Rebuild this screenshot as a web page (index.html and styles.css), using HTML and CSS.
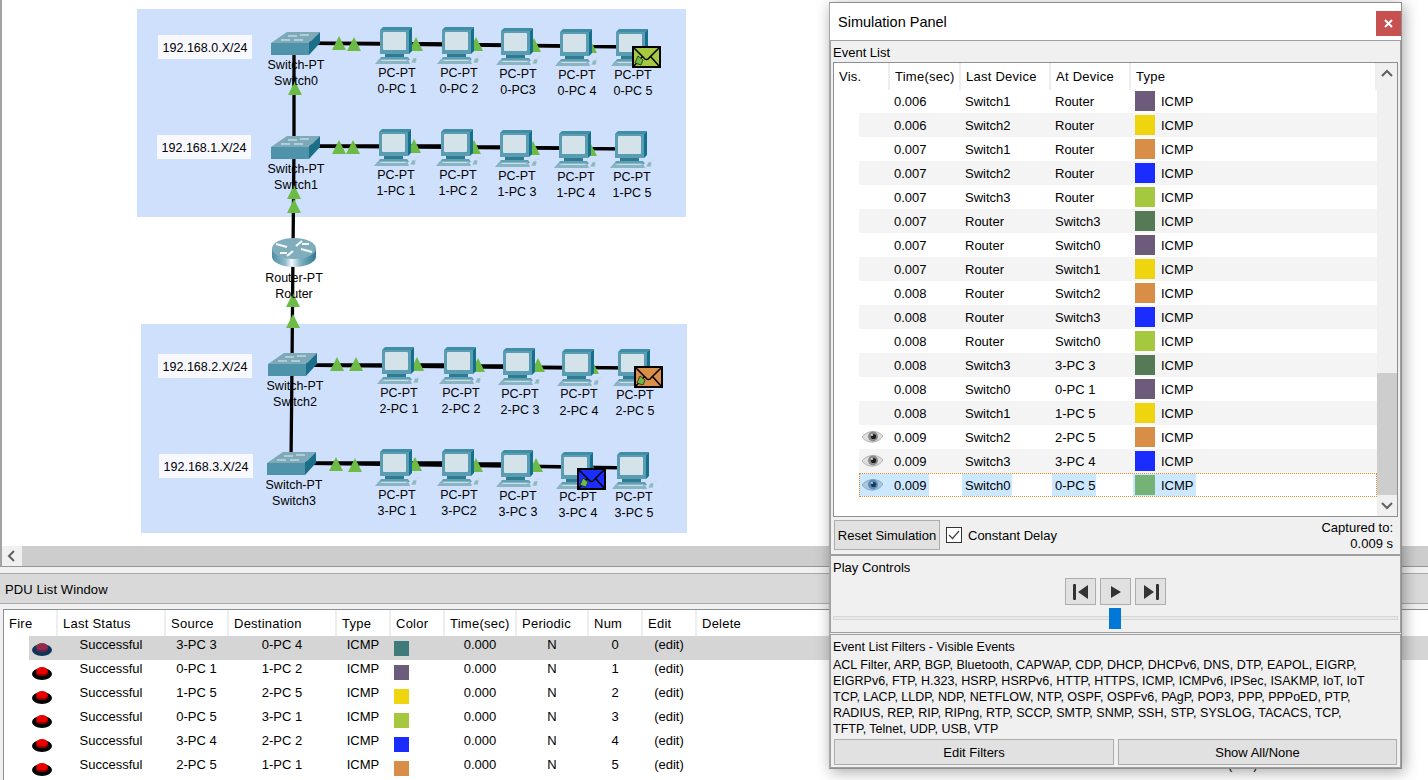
FILE: index.html
```html
<!DOCTYPE html>
<html lang="en">
<head>
<meta charset="utf-8">
<title>Simulation Panel</title>
<link rel="stylesheet" href="styles.css">
</head>
<body>
<svg class="defs" width="0" height="0" aria-hidden="true">
  <defs>
    <linearGradient id="routerSide" x1="0" x2="1" y1="0" y2="0">
      <stop offset="0" stop-color="#4e8ea3"/><stop offset=".3" stop-color="#8fbac8"/><stop offset=".45" stop-color="#f4f9fb"/><stop offset=".65" stop-color="#7fb0c0"/><stop offset="1" stop-color="#2f7a92"/>
    </linearGradient>
    <symbol id="tri" width="14" height="14" viewBox="0 0 14 14"><polygon points="7,0 14,14 0,14" fill="#6cbb45"/></symbol>
    <symbol id="pc" width="47" height="38" viewBox="0 0 47 38">
      <path d="M40 31c1-2 3-2 5-2" fill="none" stroke="#c4dbe4"/>
      <polygon points="36,36 38,31 42,31 41,36" fill="#8fb8c6" stroke="#d7e6ec" stroke-width=".6"/>
      <polygon points="5,3 8,0 37,0 34,3" fill="#3f8ea6"/>
      <polygon points="34,3 37,0 37,24 34,27" fill="#14708c"/>
      <rect x="5" y="3" width="29" height="24" fill="#5a9db3"/>
      <rect x="8" y="5" width="23" height="18" rx="1" fill="#d4e3ea"/>
      <rect x="10" y="27" width="19" height="3" fill="#2f7b92"/>
      <polygon points="6,30 33,30 35,33 4,33" fill="#5f9fb3"/>
      <polygon points="4,32 33,32 35,37 0,37" fill="#89b4c3"/>
      <polygon points="7,33 31,33 32,34 6,34" fill="#c9dde5"/>
    </symbol>
    <symbol id="switch" width="50" height="24" viewBox="0 0 50 24">
      <polygon points="0,11 16,0 49,0 38,11" fill="#7da9b8"/>
      <rect x="0" y="11" width="38" height="12" fill="#4f93aa"/>
      <polygon points="38,11 49,0 49,11 38,23" fill="#1c6f89"/>
      <path d="M17 4h9M29 3h9M10 8h9M23 8h9" stroke="#e6f0f3" stroke-width="1" fill="none"/>
    </symbol>
    <symbol id="router" width="44" height="30" viewBox="0 0 44 30">
      <path d="M0 11v8c0 5 10 10 22 10s22-5 22-10v-8z" fill="url(#routerSide)"/>
      <ellipse cx="22" cy="10.500" rx="22" ry="10.500" fill="#7fadbc"/>
      <path d="M4 6l11 3M40 14l-11-3M15 18l6-5M30 3l-6 5M8 15h7M37 6h-7" stroke="#f4f8fa" stroke-width="2.200" fill="none"/>
    </symbol>
    <symbol id="env" width="29" height="22" viewBox="0 0 29 22">
      <rect x="1" y="1" width="27" height="20" stroke="#000" stroke-width="2"/>
      <path d="M2 2l10 10c1 2 4 2 5 0L27 2M2 20l8-9M27 20l-8-9" fill="none" stroke="#000" stroke-width="1.500"/>
      <polygon points="6,10 11,14 9,19 3,17" fill="#6cbb45" stroke="#222" stroke-width=".8"/>
    </symbol>
    <symbol id="eye" width="21" height="14" viewBox="0 0 21 14">
      <path d="M0 7C4 1 15-1 21 6c-4 7-15 9-21 1z" fill="#dedede" stroke="#a4a4a4" stroke-width=".8"/>
      <circle cx="11" cy="6.500" r="5" fill="#8a8a8a"/>
      <circle cx="11.500" cy="6.500" r="2.600" fill="#1d1d1d"/>
      <circle cx="10" cy="5" r=".9" fill="#fff"/>
    </symbol>
    <symbol id="eyeblue" width="21" height="14" viewBox="0 0 21 14">
      <path d="M0 7C4 1 15-1 21 6c-4 7-15 9-21 1z" fill="#a9c6df" stroke="#7c9fbd" stroke-width=".8"/>
      <circle cx="11" cy="6.500" r="5" fill="#5d8cb2"/>
      <circle cx="11.500" cy="6.500" r="2.600" fill="#173a5a"/>
      <circle cx="10" cy="5" r=".9" fill="#dbeafa"/>
    </symbol>
    <symbol id="fire" width="20" height="14" viewBox="0 0 20 14">
      <ellipse cx="10" cy="8" rx="10" ry="6" fill="#000"/>
      <ellipse cx="10" cy="5.500" rx="6" ry="4.500" fill="#e60000"/>
      <path d="M4 6c1 3 11 3 12 0v2c-2 3-10 3-12 0z" fill="#8e0000"/>
    </symbol>
    <symbol id="fireon" width="20" height="14" viewBox="0 0 20 14">
      <ellipse cx="10" cy="8" rx="10" ry="6" fill="#0e3358"/>
      <ellipse cx="10" cy="5.500" rx="6" ry="4.500" fill="#8f2c4c"/>
      <path d="M4 6c1 3 11 3 12 0v2c-2 3-10 3-12 0z" fill="#5f2447"/>
    </symbol>
  </defs>
</svg>

<div class="app">
  <section class="workspace">
    <div class="canvas">
      <svg class="topology" width="1426" height="546" viewBox="2 0 1426 546">
        <rect class="zone" x="137" y="9" width="549" height="208"/>
        <rect class="zone" x="141" y="324" width="546" height="209"/>

        <rect class="netbox" x="158" y="35" width="94" height="24"/>
        <rect class="netbox" x="157" y="135" width="94" height="24"/>
        <rect class="netbox" x="158" y="354" width="94" height="24"/>
        <rect class="netbox" x="159" y="454" width="94" height="24"/>
        <text class="lbl" x="205" y="52">192.168.0.X/24</text>
        <text class="lbl" x="204" y="152">192.168.1.X/24</text>
        <text class="lbl" x="205" y="371">192.168.2.X/24</text>
        <text class="lbl" x="206" y="471">192.168.3.X/24</text>

        <g class="links">
          <polyline points="294,43 294,147 293,252 292,365 291,463"/>
          <path d="M294 43L397 44M294 43L459 44M294 43L518 45M294 43L577 46M294 43L633 47"/>
          <path d="M294 146L396 146M294 146L458 146M294 146L517 147M294 146L576 148M294 146L632 149"/>
          <path d="M292 365L399 365M292 365L461 365M292 365L520 366M292 365L579 368M292 365L635 368"/>
          <path d="M291 463L397 463M291 463L459 463M291 463L518 464M291 463L578 467M291 463L634 468"/>
        </g>

        <use href="#tri" x="332" y="36"/><use href="#tri" x="347" y="37"/><use href="#tri" x="409" y="37"/><use href="#tri" x="469" y="37"/><use href="#tri" x="527" y="38"/><use href="#tri" x="583" y="39"/>
        <use href="#tri" x="332" y="140"/><use href="#tri" x="346" y="140"/><use href="#tri" x="407" y="139"/><use href="#tri" x="467" y="140"/><use href="#tri" x="526" y="141"/><use href="#tri" x="583" y="142"/>
        <use href="#tri" x="330" y="357"/><use href="#tri" x="349" y="357"/><use href="#tri" x="410" y="357"/><use href="#tri" x="471" y="358"/><use href="#tri" x="531" y="358"/><use href="#tri" x="585" y="360"/>
        <use href="#tri" x="329" y="457"/><use href="#tri" x="348" y="458"/><use href="#tri" x="408" y="457"/><use href="#tri" x="469" y="458"/><use href="#tri" x="529" y="458"/><use href="#tri" x="583" y="460"/>
        <use href="#tri" x="288" y="81"/><use href="#tri" x="287" y="185"/><use href="#tri" x="287" y="199"/><use href="#tri" x="286" y="293"/><use href="#tri" x="286" y="314"/>

        <use href="#switch" x="271" y="32"/>
        <use href="#switch" x="271" y="136"/>
        <use href="#router" x="272" y="238"/>
        <use href="#switch" x="268" y="353"/>
        <use href="#switch" x="267" y="452"/>

        <use href="#pc" x="375" y="27"/><use href="#pc" x="437" y="27"/><use href="#pc" x="496" y="28"/><use href="#pc" x="555" y="29"/><use href="#pc" x="611" y="29"/>
        <use href="#pc" x="374" y="129"/><use href="#pc" x="436" y="129"/><use href="#pc" x="495" y="130"/><use href="#pc" x="554" y="131"/><use href="#pc" x="610" y="131"/>
        <use href="#pc" x="377" y="347"/><use href="#pc" x="439" y="347"/><use href="#pc" x="498" y="348"/><use href="#pc" x="557" y="349"/><use href="#pc" x="613" y="349"/>
        <use href="#pc" x="375" y="449"/><use href="#pc" x="437" y="449"/><use href="#pc" x="496" y="450"/><use href="#pc" x="556" y="452"/><use href="#pc" x="612" y="452"/>

        <use class="env-lime" href="#env" x="632" y="46"/>
        <use class="env-orange" href="#env" x="634" y="366"/>
        <use class="env-blue" href="#env" x="577" y="468"/>

        <text class="lbl" x="296" y="69">Switch-PT</text><text class="lbl" x="296" y="85">Switch0</text>
        <text class="lbl" x="296" y="173">Switch-PT</text><text class="lbl" x="296" y="189">Switch1</text>
        <text class="lbl" x="294" y="282">Router-PT</text><text class="lbl" x="294" y="298">Router</text>
        <text class="lbl" x="295" y="390">Switch-PT</text><text class="lbl" x="295" y="406">Switch2</text>
        <text class="lbl" x="294" y="489">Switch-PT</text><text class="lbl" x="294" y="505">Switch3</text>

        <text class="lbl" x="397" y="77">PC-PT</text><text class="lbl" x="397" y="93">0-PC 1</text>
        <text class="lbl" x="459" y="77">PC-PT</text><text class="lbl" x="459" y="93">0-PC 2</text>
        <text class="lbl" x="518" y="78">PC-PT</text><text class="lbl" x="518" y="94">0-PC3</text>
        <text class="lbl" x="577" y="79">PC-PT</text><text class="lbl" x="577" y="95">0-PC 4</text>
        <text class="lbl" x="633" y="79">PC-PT</text><text class="lbl" x="633" y="95">0-PC 5</text>

        <text class="lbl" x="396" y="179">PC-PT</text><text class="lbl" x="396" y="195">1-PC 1</text>
        <text class="lbl" x="458" y="179">PC-PT</text><text class="lbl" x="458" y="195">1-PC 2</text>
        <text class="lbl" x="517" y="180">PC-PT</text><text class="lbl" x="517" y="196">1-PC 3</text>
        <text class="lbl" x="576" y="181">PC-PT</text><text class="lbl" x="576" y="197">1-PC 4</text>
        <text class="lbl" x="632" y="181">PC-PT</text><text class="lbl" x="632" y="197">1-PC 5</text>

        <text class="lbl" x="399" y="397">PC-PT</text><text class="lbl" x="399" y="413">2-PC 1</text>
        <text class="lbl" x="461" y="397">PC-PT</text><text class="lbl" x="461" y="413">2-PC 2</text>
        <text class="lbl" x="520" y="398">PC-PT</text><text class="lbl" x="520" y="414">2-PC 3</text>
        <text class="lbl" x="579" y="398">PC-PT</text><text class="lbl" x="579" y="415">2-PC 4</text>
        <text class="lbl" x="635" y="399">PC-PT</text><text class="lbl" x="635" y="415">2-PC 5</text>

        <text class="lbl" x="397" y="499">PC-PT</text><text class="lbl" x="397" y="515">3-PC 1</text>
        <text class="lbl" x="459" y="499">PC-PT</text><text class="lbl" x="459" y="515">3-PC2</text>
        <text class="lbl" x="518" y="500">PC-PT</text><text class="lbl" x="518" y="516">3-PC 3</text>
        <text class="lbl" x="578" y="501">PC-PT</text><text class="lbl" x="578" y="517">3-PC 4</text>
        <text class="lbl" x="634" y="501">PC-PT</text><text class="lbl" x="634" y="517">3-PC 5</text>
      </svg>
    </div>
    <div class="hscroll">
      <div class="hscroll-btn"><svg class="chev" width="10" height="12" viewBox="0 0 10 12"><polyline points="7,1 2,6 7,11"/></svg></div>
    </div>
  </section>

  <div class="pdu-title">PDU List Window</div>

  <div class="pdu-wrap">
    <table class="pdu">
      <colgroup>
        <col class="c-fire"><col class="c-status"><col class="c-src"><col class="c-dst"><col class="c-type"><col class="c-color"><col class="c-time"><col class="c-per"><col class="c-num"><col class="c-edit"><col class="c-del"><col>
      </colgroup>
      <thead>
        <tr><th>Fire</th><th>Last Status</th><th>Source</th><th>Destination</th><th>Type</th><th>Color</th><th>Time(sec)</th><th>Periodic</th><th>Num</th><th>Edit</th><th>Delete</th><th></th></tr>
      </thead>
      <tbody>
        <tr class="active"><td class="firecell"><svg class="fire"><use href="#fireon"/></svg></td><td>Successful</td><td>3-PC 3</td><td>0-PC 4</td><td>ICMP</td><td><span class="dot teal"></span></td><td>0.000</td><td>N</td><td>0</td><td>(edit)</td><td></td><td></td></tr>
        <tr><td class="firecell"><svg class="fire"><use href="#fire"/></svg></td><td>Successful</td><td>0-PC 1</td><td>1-PC 2</td><td>ICMP</td><td><span class="dot purple"></span></td><td>0.000</td><td>N</td><td>1</td><td>(edit)</td><td></td><td></td></tr>
        <tr><td class="firecell"><svg class="fire"><use href="#fire"/></svg></td><td>Successful</td><td>1-PC 5</td><td>2-PC 5</td><td>ICMP</td><td><span class="dot yellow"></span></td><td>0.000</td><td>N</td><td>2</td><td>(edit)</td><td></td><td></td></tr>
        <tr><td class="firecell"><svg class="fire"><use href="#fire"/></svg></td><td>Successful</td><td>0-PC 5</td><td>3-PC 1</td><td>ICMP</td><td><span class="dot lime"></span></td><td>0.000</td><td>N</td><td>3</td><td>(edit)</td><td></td><td></td></tr>
        <tr><td class="firecell"><svg class="fire"><use href="#fire"/></svg></td><td>Successful</td><td>3-PC 4</td><td>2-PC 2</td><td>ICMP</td><td><span class="dot blue"></span></td><td>0.000</td><td>N</td><td>4</td><td>(edit)</td><td></td><td></td></tr>
        <tr><td class="firecell"><svg class="fire"><use href="#fire"/></svg></td><td>Successful</td><td>2-PC 5</td><td>1-PC 1</td><td>ICMP</td><td><span class="dot orange"></span></td><td>0.000</td><td>N</td><td>5</td><td>(edit)</td><td></td><td class="under-panel">(edit)</td></tr>
      </tbody>
    </table>
  </div>
</div>

<aside class="panel">
  <header class="panel-head">
    <span class="panel-title">Simulation Panel</span>
    <button class="close" type="button" aria-label="Close"><svg width="9" height="9" viewBox="0 0 9 9"><path d="M1 1l7 7M8 1L1 8"/></svg></button>
  </header>

  <section class="group g-events">
    <div class="group-label">Event List</div>
    <div class="listbox">
      <div class="list-main">
        <div class="ev-head"><span>Vis.</span><span>Time(sec)</span><span>Last Device</span><span>At Device</span><span>Type</span></div>
        <div class="ev-row"><span class="vis"></span><span class="tm"><b>0.006</b></span><span class="dev"><b>Switch1</b></span><span class="dev"><b>Router</b></span><span class="ty"><b><i class="sw purple"></i>ICMP</b></span></div>
        <div class="ev-row"><span class="vis"></span><span class="tm"><b>0.006</b></span><span class="dev"><b>Switch2</b></span><span class="dev"><b>Router</b></span><span class="ty"><b><i class="sw yellow"></i>ICMP</b></span></div>
        <div class="ev-row"><span class="vis"></span><span class="tm"><b>0.007</b></span><span class="dev"><b>Switch1</b></span><span class="dev"><b>Router</b></span><span class="ty"><b><i class="sw orange"></i>ICMP</b></span></div>
        <div class="ev-row"><span class="vis"></span><span class="tm"><b>0.007</b></span><span class="dev"><b>Switch2</b></span><span class="dev"><b>Router</b></span><span class="ty"><b><i class="sw blue"></i>ICMP</b></span></div>
        <div class="ev-row"><span class="vis"></span><span class="tm"><b>0.007</b></span><span class="dev"><b>Switch3</b></span><span class="dev"><b>Router</b></span><span class="ty"><b><i class="sw lime"></i>ICMP</b></span></div>
        <div class="ev-row"><span class="vis"></span><span class="tm"><b>0.007</b></span><span class="dev"><b>Router</b></span><span class="dev"><b>Switch3</b></span><span class="ty"><b><i class="sw moss"></i>ICMP</b></span></div>
        <div class="ev-row"><span class="vis"></span><span class="tm"><b>0.007</b></span><span class="dev"><b>Router</b></span><span class="dev"><b>Switch0</b></span><span class="ty"><b><i class="sw purple"></i>ICMP</b></span></div>
        <div class="ev-row"><span class="vis"></span><span class="tm"><b>0.007</b></span><span class="dev"><b>Router</b></span><span class="dev"><b>Switch1</b></span><span class="ty"><b><i class="sw yellow"></i>ICMP</b></span></div>
        <div class="ev-row"><span class="vis"></span><span class="tm"><b>0.008</b></span><span class="dev"><b>Router</b></span><span class="dev"><b>Switch2</b></span><span class="ty"><b><i class="sw orange"></i>ICMP</b></span></div>
        <div class="ev-row"><span class="vis"></span><span class="tm"><b>0.008</b></span><span class="dev"><b>Router</b></span><span class="dev"><b>Switch3</b></span><span class="ty"><b><i class="sw blue"></i>ICMP</b></span></div>
        <div class="ev-row"><span class="vis"></span><span class="tm"><b>0.008</b></span><span class="dev"><b>Router</b></span><span class="dev"><b>Switch0</b></span><span class="ty"><b><i class="sw lime"></i>ICMP</b></span></div>
        <div class="ev-row"><span class="vis"></span><span class="tm"><b>0.008</b></span><span class="dev"><b>Switch3</b></span><span class="dev"><b>3-PC 3</b></span><span class="ty"><b><i class="sw moss"></i>ICMP</b></span></div>
        <div class="ev-row"><span class="vis"></span><span class="tm"><b>0.008</b></span><span class="dev"><b>Switch0</b></span><span class="dev"><b>0-PC 1</b></span><span class="ty"><b><i class="sw purple"></i>ICMP</b></span></div>
        <div class="ev-row"><span class="vis"></span><span class="tm"><b>0.008</b></span><span class="dev"><b>Switch1</b></span><span class="dev"><b>1-PC 5</b></span><span class="ty"><b><i class="sw yellow"></i>ICMP</b></span></div>
        <div class="ev-row"><span class="vis"><svg class="eye"><use href="#eye"/></svg></span><span class="tm"><b>0.009</b></span><span class="dev"><b>Switch2</b></span><span class="dev"><b>2-PC 5</b></span><span class="ty"><b><i class="sw orange"></i>ICMP</b></span></div>
        <div class="ev-row"><span class="vis"><svg class="eye"><use href="#eye"/></svg></span><span class="tm"><b>0.009</b></span><span class="dev"><b>Switch3</b></span><span class="dev"><b>3-PC 4</b></span><span class="ty"><b><i class="sw blue"></i>ICMP</b></span></div>
        <div class="ev-row selected"><span class="vis"><svg class="eye"><use href="#eyeblue"/></svg></span><span class="tm"><b>0.009</b></span><span class="dev"><b>Switch0</b></span><span class="dev"><b>0-PC 5</b></span><span class="ty"><b><i class="sw green"></i>ICMP</b></span></div>
      </div>
      <div class="vscroll">
        <div class="vbtn"><svg class="chev" width="12" height="8" viewBox="0 0 12 8"><polyline points="1,7 6,2 11,7"/></svg></div>
        <div class="vtrack"><div class="vthumb"></div></div>
        <div class="vbtn vbtn-down"><svg class="chev" width="12" height="8" viewBox="0 0 12 8"><polyline points="1,1 6,6 11,1"/></svg></div>
      </div>
    </div>
    <div class="sim-row">
      <button class="btn reset" type="button">Reset Simulation</button>
      <span class="check"><svg width="12" height="10" viewBox="0 0 12 10"><polyline points="1,5 4.500,8.500 11,1"/></svg></span>
      <span class="check-label">Constant Delay</span>
      <div class="captured"><div>Captured to:</div><div>0.009 s</div></div>
    </div>
  </section>

  <section class="group g-play">
    <div class="group-label">Play Controls</div>
    <div class="play-row">
      <button class="pbtn" type="button" aria-label="Back"><svg width="16" height="16" viewBox="0 0 16 16"><rect x="0" y="0" width="3" height="16" rx="1"/><polygon points="15,1 15,15 5,8"/></svg></button>
      <button class="pbtn" type="button" aria-label="Play"><svg width="16" height="16" viewBox="0 0 16 16"><polygon points="3,2 3,14 13,8"/></svg></button>
      <button class="pbtn" type="button" aria-label="Forward"><svg width="16" height="16" viewBox="0 0 16 16"><polygon points="1,1 1,15 11,8"/><rect x="13" y="0" width="3" height="16" rx="1"/></svg></button>
    </div>
    <div class="slider"><div class="slider-track"></div><div class="slider-handle"></div></div>
  </section>

  <section class="group g-filters">
    <div class="group-label">Event List Filters - Visible Events</div>
    <p class="filters">ACL Filter, ARP, BGP, Bluetooth, CAPWAP, CDP, DHCP, DHCPv6, DNS, DTP, EAPOL, EIGRP,<br>EIGRPv6, FTP, H.323, HSRP, HSRPv6, HTTP, HTTPS, ICMP, ICMPv6, IPSec, ISAKMP, IoT, IoT<br>TCP, LACP, LLDP, NDP, NETFLOW, NTP, OSPF, OSPFv6, PAgP, POP3, PPP, PPPoED, PTP,<br>RADIUS, REP, RIP, RIPng, RTP, SCCP, SMTP, SNMP, SSH, STP, SYSLOG, TACACS, TCP,<br>TFTP, Telnet, UDP, USB, VTP</p>
    <div class="filter-btns">
      <button class="btn" type="button">Edit Filters</button>
      <button class="btn" type="button">Show All/None</button>
    </div>
  </section>
</aside>
</body>
</html>
```

FILE: styles.css
```css
* { box-sizing: border-box; }
html, body { margin: 0; padding: 0; }
body {
  position: relative;
  width: 1428px;
  height: 780px;
  overflow: hidden;
  background: #f0f0f0;
  color: #000;
  font: 13px/16px "Liberation Sans", Arial, sans-serif;
}
.defs { position: absolute; }

.app { display: flex; flex-direction: column; height: 780px; }

.workspace {
  height: 567px;
  display: flex;
  flex-direction: column;
  border-left: 2px solid #a3a3a3;
  border-bottom: 1px solid #8f979c;
  background: #fff;
}
.canvas { height: 546px; overflow: hidden; }
.topology { display: block; }
.zone { fill: #cfe0fd; }
.netbox { fill: #f8f9ff; }
.lbl { font: 12.500px "Liberation Sans", Arial, sans-serif; text-anchor: middle; fill: #000; }
.links polyline, .links path { fill: none; stroke: #000; stroke-width: 3.300; }
.env-lime { fill: #a6c93f; }
.env-orange { fill: #d98f48; }
.env-blue { fill: #1a2eff; }

.hscroll { height: 20px; background: #cdcdcd; }
.hscroll-btn { width: 20px; height: 20px; background: #f0f0f0; display: flex; align-items: center; justify-content: center; }
.chev { display: block; }
.chev polyline { fill: none; stroke: #606060; stroke-width: 2; }

.pdu-title {
  height: 31px;
  margin-top: 6px;
  padding-left: 5px;
  line-height: 32px;
  letter-spacing: .1px;
  background: #d9d9d9;
  border-top: 1px solid #a9a9a9;
  border-bottom: 1px solid #a9a9a9;
}

.pdu-wrap {
  flex: 1;
  margin: 5px 0 0 3px;
  background: #fff;
  border-top: 1px solid #8a9095;
  border-left: 1px solid #8a9095;
  overflow: hidden;
}
.pdu { table-layout: fixed; width: 1424px; border-collapse: collapse; }
.c-fire { width: 53px; }
.c-status { width: 108px; }
.c-src { width: 63px; }
.c-dst { width: 108px; }
.c-type { width: 54px; }
.c-color { width: 54px; }
.c-time { width: 72px; }
.c-per { width: 72px; }
.c-num { width: 54px; }
.c-edit { width: 54px; }
.c-del { width: 526px; }
.pdu th {
  height: 26px;
  padding: 2px 0 0 5px;
  text-align: left;
  font-weight: 400;
  letter-spacing: .25px;
  white-space: nowrap;
  vertical-align: middle;
  border-right: 2px solid #eeeeee;
}
.pdu th:last-child, .pdu th:nth-child(11) { border-right: 0; }
.pdu td {
  height: 24px;
  padding: 0 0 6px;
  text-align: center;
  white-space: nowrap;
  vertical-align: middle;
}
.pdu tr.active td { background: #d5d5d5; }
.pdu tr.active td.firecell { background: linear-gradient(to right, #fff 25px, #d5d5d5 25px); }
.pdu td.firecell { padding: 0 0 0 28px; text-align: left; }
.pdu td.under-panel { text-align: left; padding-left: 6px; }
.fire { display: block; width: 20px; height: 14px; margin-top: 1px; }
.dot { display: block; width: 15px; height: 15px; margin-left: 4px; position: relative; top: 3px; }

.purple { background: #6c5b7b; }
.yellow { background: #eed50f; }
.orange { background: #d98e48; }
.blue { background: #1a2cff; }
.lime { background: #a5c83f; }
.moss { background: #567a56; }
.green { background: #75b276; }
.teal { background: #3f7b7b; }

/* floating simulation panel */
.panel {
  position: absolute;
  left: 829px;
  top: 2px;
  width: 573px;
  height: 767px;
  background: #f0f0f0;
  border: 1px solid #8e8e8e;
  border-left-color: #a8a8a8;
  box-shadow: 2px 3px 14px rgba(0, 0, 0, .35);
}
.panel-head {
  height: 37px;
  background: #fff;
  display: flex;
  justify-content: space-between;
  align-items: flex-start;
}
.panel-title { font-size: 14.500px; line-height: 38px; padding-left: 8px; }
.close {
  width: 25px;
  height: 25px;
  margin-top: 8px;
  padding: 0;
  border: 0;
  background: #c75050;
  display: flex;
  align-items: center;
  justify-content: center;
}
.close path { stroke: #fff; stroke-width: 2; fill: none; }

.group { border: 1px solid #a0a0a0; }
.group-label { padding-left: 2px; }
.g-events { height: 515px; }
.g-events .group-label { height: 21px; line-height: 24px; }
.g-play { height: 78px; }
.g-play .group-label { height: 22px; line-height: 24px; }
.g-filters { height: 134px; margin-top: 1px; }
.g-filters .group-label { height: 21px; line-height: 24px; font-size: 12.500px; }

.listbox {
  margin-left: 2px;
  width: 565px;
  height: 455px;
  border: 1px solid #8a9095;
  background: #fff;
  display: flex;
}
.list-main { width: 543px; }
.ev-head {
  height: 26px;
  display: grid;
  grid-template-columns: 56px 71px 90px 80px 1fr;
  letter-spacing: .25px;
  line-height: 27px;
}
.ev-head span { padding-left: 5px; border-right: 2px solid #eeeeee; }
.ev-head span:last-child { padding-left: 5px; border-right: 2px solid #eeeeee; }
.ev-row {
  height: 24px;
  margin-left: 25px;
  display: grid;
  grid-template-columns: 31px 71px 90px 80px 1fr;
  align-items: stretch;
}
.ev-row:nth-child(odd) { background: #f4f4f4; }
.ev-row span { display: flex; }
.ev-row b { font-weight: 400; display: flex; align-items: center; height: 22px; margin-top: 1px; padding-top: 2px; }
.vis { align-items: center; padding-left: 3px; }
.eye { display: block; width: 21px; height: 14px; }
.tm b { padding-left: 4px; width: 39px; }
.dev b { padding-left: 3px; padding-right: 1px; margin-left: 1px; }
.ty b { padding-left: 2px; margin-left: 2px; width: 63px; }
.sw { display: block; width: 20px; height: 20px; margin: -2px 6px 0 0; flex: none; }
.selected {
  outline: 1px dotted #e8862a;
  outline-offset: -1px;
  background: #fff;
}
.selected .vis, .selected b { background: #cce8ff; }
.selected .vis { margin: 1px 0; }
.selected .tm b { width: 39px; }

.vscroll { width: 20px; margin-left: 0; background: #f0f0f0; display: flex; flex-direction: column; }
.vbtn { height: 20px; display: flex; align-items: center; justify-content: center; }
.vbtn-down { height: 21px; }
.vtrack { flex: 1; display: flex; flex-direction: column; justify-content: flex-end; }
.vthumb { height: 122px; background: #cdcdcd; }

.sim-row { display: flex; align-items: flex-start; padding: 3px 7px 0 3px; }
.btn {
  font: 13px/18px "Liberation Sans", Arial, sans-serif;
  color: #000;
  background: #e1e1e1;
  border: 1px solid #adadad;
  padding: 2px 0 0;
}
.reset { width: 106px; height: 30px; }
.check {
  width: 16px;
  height: 16px;
  margin: 7px 0 0 6px;
  background: #fff;
  border: 1px solid #333;
  display: flex;
  align-items: center;
  justify-content: center;
}
.check polyline { fill: none; stroke: #444; stroke-width: 1.200; }
.check-label { margin: 8px 0 0 6px; }
.captured { margin-left: auto; text-align: right; }

.play-row { display: flex; justify-content: center; gap: 4px; }
.pbtn {
  width: 31px;
  height: 27px;
  padding: 0;
  background: #e1e1e1;
  border: 1px solid #adadad;
  display: flex;
  align-items: center;
  justify-content: center;
}
.pbtn svg { fill: #333; display: block; }
.slider { position: relative; height: 21px; margin: 3px 2px 0; }
.slider-track { position: absolute; left: 0; right: 0; top: 8px; height: 4px; background: #e7eae7; border: 1px solid #d6d6d6; }
.slider-handle { position: absolute; left: 276px; top: 0; width: 12px; height: 21px; background: #0078d7; }

.filters {
  margin: 0;
  height: 80px;
  padding: 1px 0 0 2px;
  font-size: 12.500px;
  line-height: 16px;
  white-space: nowrap;
}
.filter-btns { display: flex; gap: 4px; margin: 3px 0 0 3px; }
.filter-btns .btn { height: 26px; width: 280px; }
.filter-btns .btn + .btn { width: 279px; }
```
